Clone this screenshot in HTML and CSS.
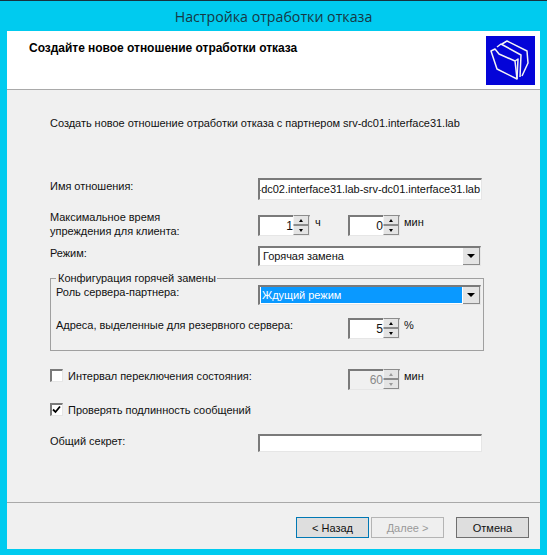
FILE: index.html
```html
<!DOCTYPE html>
<html lang="ru">
<head>
    <meta charset="UTF-8">
    <title>Настройка отработки отказа</title>
    <link rel="stylesheet" href="styles.css">
</head>
<body>
    <div class="titlebar">Настройка отработки отказа</div>
    <div class="dialog">
        <header class="head">
            <h1>Создайте новое отношение отработки отказа</h1>
            <svg class="logo" width="49" height="49" viewBox="0 0 49 49">
                <g fill="none" stroke="#f4f4f4" stroke-width="1.5" stroke-linejoin="round">
                    <path d="M16 8 L21 5 L41 15 L42 27 L36 40"/>
                    <path d="M11 11 L15 8 L35 19 L34 41"/>
                    <path d="M5 15 L9 13 L13 18 L29 25 L31 43 L11 33 Z"/>
                    <path d="M29 25 L32 23 L31 43"/>
                </g>
            </svg>
        </header>

        <main class="content">
            <p class="intro">Создать новое отношение отработки отказа с партнером srv-dc01.interface31.lab</p>

            <div class="row row-name">
                <label>Имя отношения:</label>
                <div class="field name-field"><span class="name-text">srv-dc02.interface31.lab-srv-dc01.interface31.lab</span></div>
            </div>

            <div class="row row-time">
                <label>Максимальное время<br>упреждения для клиента:</label>
                <div class="controls">
                    <div class="spin"><span class="spin-value">1</span><span class="spin-btns"><i class="up"></i><i class="down"></i></span></div>
                    <span class="unit unit-h">ч</span>
                    <div class="spin"><span class="spin-value">0</span><span class="spin-btns"><i class="up"></i><i class="down"></i></span></div>
                    <span class="unit">мин</span>
                </div>
            </div>

            <div class="row row-mode">
                <label>Режим:</label>
                <div class="field combo"><span class="combo-text">Горячая замена</span><span class="combo-btn"></span></div>
            </div>

            <fieldset class="group">
                <legend>Конфигурация горячей замены</legend>
                <div class="row group-role">
                    <label>Роль сервера-партнера:</label>
                    <div class="field combo"><span class="combo-text selected">Ждущий режим</span><span class="combo-btn"></span></div>
                </div>
                <div class="row group-addr">
                    <label>Адреса, выделенные для резервного сервера:</label>
                    <div class="controls">
                        <div class="spin"><span class="spin-value">5</span><span class="spin-btns"><i class="up"></i><i class="down"></i></span></div>
                        <span class="unit">%</span>
                    </div>
                </div>
            </fieldset>

            <div class="row row-interval">
                <label class="check"><span class="box"></span>Интервал переключения состояния:</label>
                <div class="controls">
                    <div class="spin disabled"><span class="spin-value">60</span><span class="spin-btns"><i class="up"></i><i class="down"></i></span></div>
                    <span class="unit">мин</span>
                </div>
            </div>

            <div class="row row-auth">
                <label class="check"><span class="box">
                    <svg width="9" height="9" viewBox="0 0 9 9"><path d="M1 4.5 L3.5 7 L8 1.5" fill="none" stroke="#000" stroke-width="1.8"/></svg>
                </span>Проверять подлинность сообщений</label>
            </div>

            <div class="row row-secret">
                <label>Общий секрет:</label>
                <div class="field secret-field"></div>
            </div>
        </main>

        <footer class="foot">
            <button class="btn btn-default">&lt; Назад</button>
            <button class="btn" disabled>Далее &gt;</button>
            <button class="btn btn-cancel">Отмена</button>
        </footer>
    </div>
</body>
</html>
```

FILE: styles.css
```css
html, body {
    margin: 0;
    height: 555px;
    overflow: hidden;
}
body {
    background: #00cbef;
    border-top: 1px solid #17323f;
    box-sizing: border-box;
    font-family: "Liberation Sans", Arial, sans-serif;
    font-size: 11px;
    line-height: 14px;
    letter-spacing: -0.03px;
    color: #111;
}
.titlebar {
    height: 30px;
    line-height: 31px;
    text-align: center;
    font-family: "Open Sans", sans-serif;
    font-size: 14.2px;
    letter-spacing: 0;
    color: #173844;
}
.dialog {
    margin: 0 7px;
    height: 518px;
    background: #f0f0f0;
    display: flex;
    flex-direction: column;
}
.head {
    flex: none;
    background: #fff;
    border-bottom: 1px solid #a9a9a9;
    display: flex;
    justify-content: space-between;
    padding: 5px 5px 0 22px;
    height: 53px;
}
.head h1 {
    margin: 5px 0 0 0;
    font-size: 12px;
    line-height: 14px;
    font-weight: bold;
    color: #000;
}
.logo {
    display: block;
    background: #0404d8;
}
.content {
    flex: 1;
    padding: 26px 0 0 43px;
}
.intro {
    margin: 0;
}
.row {
    display: grid;
    grid-template-columns: 208px 224px;
}
.row-name { margin-top: 48px; height: 22px; }
.row-time { margin-top: 9px; height: 27px; }
.row-mode { margin-top: 10px; height: 20px; }
.row-interval { margin-top: 18px; height: 21px; }
.row-auth { margin-top: 13px; height: 14px; }
.row-secret { margin-top: 17px; height: 18px; }

.row-time .controls { margin-top: 6px; }
.row-name label { padding-top: 1px; }
.row-time label { padding-top: 1px; }

.field {
    box-sizing: border-box;
    background: #fff;
    border-style: solid;
    border-width: 2px 1px 1px 2px;
    border-color: #7a7a7a #e6e6e6 #e6e6e6 #7a7a7a;
    overflow: hidden;
    white-space: nowrap;
}
.name-field {
    height: 22px;
    line-height: 18px;
    direction: rtl;
    text-align: left;
    padding-right: 1px;
}
.name-text {
    direction: ltr;
    unicode-bidi: embed;
}
.secret-field { height: 18px; }

.combo {
    display: flex;
    height: 20px;
    width: 223px;
    line-height: 16px;
}
.combo-text {
    flex: 1;
    padding-left: 3px;
    margin: 0 1px 1px 0;
}
.combo-text.selected {
    background: #0a99ff;
    color: #fff;
    padding-left: 1px;
    margin-left: 1px;
}
.combo-btn {
    width: 17px;
    flex: none;
    background: #e4e4e4;
    border-right: 1px solid #8a8a8a;
    border-bottom: 1px solid #8a8a8a;
    box-sizing: border-box;
    display: flex;
    align-items: center;
    justify-content: center;
}
.combo-btn::after {
    content: "";
    border-style: solid;
    border-width: 4px 4px 0 4px;
    border-color: #000 transparent transparent transparent;
}

.controls {
    display: flex;
    align-items: flex-start;
}
.spin {
    width: 52px;
    height: 21px;
    box-sizing: border-box;
    background: #fff;
    border-style: solid;
    border-width: 2px 1px 1px 2px;
    border-color: #7a7a7a #e6e6e6 #e6e6e6 #7a7a7a;
    display: flex;
}
.spin-value {
    flex: 1;
    text-align: right;
    line-height: 18px;
    font-size: 12px;
}
.spin-btns {
    width: 16px;
    flex: none;
    display: flex;
    flex-direction: column;
    margin-top: -2px;
}
.spin-btns i {
    flex: 1;
    background: #e4e4e4;
    border: 1px solid #8c8c8c;
    border-left-color: #f4f4f4;
    border-top-color: #8c8c8c;
    display: flex;
    align-items: center;
    justify-content: center;
}
.spin-btns .up::after,
.spin-btns .down::after {
    content: "";
    border-style: solid;
    border-color: transparent;
}
.spin-btns .up::after {
    border-width: 0 2px 3px 2px;
    border-bottom-color: #000;
}
.spin-btns .down::after {
    border-width: 3px 2px 0 2px;
    border-top-color: #000;
}
.unit {
    margin: 0 0 0 4px;
    width: 34px;
}
.unit-h { margin-left: 5px; width: 33px; }

.spin.disabled {
    background: #f0f0f0;
}
.spin.disabled .spin-value { color: #8a8a8a; }
.spin.disabled .up::after { border-bottom-color: #9a9a9a; }
.spin.disabled .down::after { border-top-color: #9a9a9a; }

.group {
    margin: 5px 0 0 0;
    padding: 0 0 0 5px;
    width: 434px;
    height: 80px;
    box-sizing: border-box;
    border: 1px solid #a0a0a0;
}
.group legend {
    margin-left: 0;
    padding: 0 1px 0 2px;
    line-height: 14px;
}
.group .row {
    grid-template-columns: 202px 224px;
}
.group-role { height: 20px; margin-top: 0; }
.group-addr { height: 21px; margin-top: 13px; }
.group-addr .controls { padding-left: 90px; }
.group-addr label { white-space: nowrap; }
.row-interval .controls { padding-left: 90px; }

.check {
    display: flex;
    align-items: flex-start;
    white-space: nowrap;
}
.box {
    width: 13px;
    height: 13px;
    box-sizing: border-box;
    flex: none;
    margin-right: 5px;
    background: #fff;
    border-style: solid;
    border-width: 2px 1px 1px 2px;
    border-color: #7a7a7a #e6e6e6 #e6e6e6 #7a7a7a;
    display: flex;
}

.foot {
    height: 47px;
    box-sizing: border-box;
    flex: none;
    border-top: 1px solid #a9a9a9;
    display: flex;
    gap: 2px;
    padding: 14px 0 0 289px;
}
.btn {
    width: 73px;
    height: 21px;
    padding: 0;
    background: #dedede;
    border: 1px solid #6f6f6f;
    font-family: inherit;
    font-size: 11px;
    color: #111;
}
.btn-default { border-color: #0078b4; }
.btn[disabled] {
    background: #efefef;
    border-color: #b4b4b4;
    color: #9a9a9a;
}
.btn-cancel { margin-left: 10px; }
```
